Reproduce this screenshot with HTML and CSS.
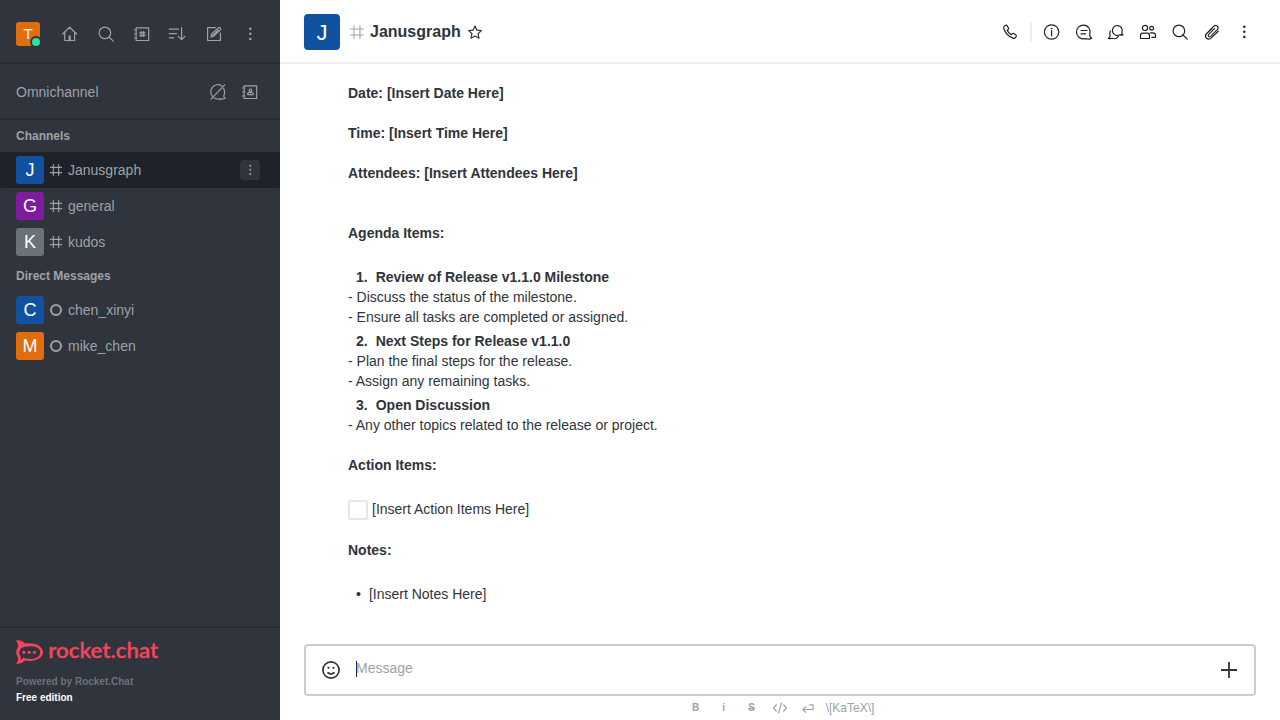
FILE: index.html
```html
<!DOCTYPE html>
<html lang="en">
<head>
<meta charset="utf-8">
<title>Janusgraph</title>
<link rel="stylesheet" href="styles.css">
</head>
<body>
<svg class="defs" aria-hidden="true">
  <symbol id="hash" viewBox="0 0 20 20"><path d="M6.7 3v14M13.3 3v14M3 6.7h14M3 13.3h14"/></symbol>
  <symbol id="search" viewBox="0 0 20 20"><circle cx="8.9" cy="8.9" r="5.8"/><path d="M13 13l4.3 4.1"/></symbol>
  <symbol id="kebab" viewBox="0 0 20 20"><g fill="currentColor" stroke="none"><circle cx="10.3" cy="4.7" r="1.25"/><circle cx="10.3" cy="9.8" r="1.25"/><circle cx="10.3" cy="15" r="1.25"/></g></symbol>
  <symbol id="book" viewBox="0 0 20 20"><path d="M4.1 5V3.8h12.6v12.7H4.1V15M4.1 7v2M4.1 11v2M2.3 6h2.6M2.3 10h2.6M2.3 14h2.6"/></symbol>
</svg>
<div class="app">
  <aside class="sidebar">
    <header class="toolbar">
      <span class="avatar avatar-s orange">T<i class="presence"></i></span>
      <nav class="tools">
        <svg class="icon" viewBox="0 0 20 20"><path d="M2.6 10L9.6 3.3 16.7 10M4.7 8.4v8.1h9.9V8.4"/><path d="M9.7 12.3v4.2" stroke-width="2.2"/></svg>
        <svg class="icon"><use href="#search"/></svg>
        <svg class="icon" viewBox="0 0 20 20"><use href="#book"/><path d="M9.200 7.400v5.300M11.600 7.400v5.300M7.700 8.800h5.400M7.700 11.300h5.400"/></svg>
        <svg class="icon" viewBox="0 0 20 20"><path d="M1.200 5.200h9.200M1.200 9.600h7.400M1.200 13.800h4.600M13.600 3.500v12M10.300 12.400l3.300 3.300 3.300-3.300"/></svg>
        <svg class="icon" viewBox="0 0 20 20"><path d="M11.500 3.700H3.600v12.800h12.800V9"/><path d="M7 12.800l.7-2.800 6.800-6.200q1.100-.7 1.900.2.800 1-.1 1.900l-6.600 6.200zM8.500 12l5.800-5.800"/></svg>
        <svg class="icon"><use href="#kebab"/></svg>
      </nav>
    </header>
    <section class="omni">
      <span>Omnichannel</span>
      <span class="omni-icons">
        <svg class="icon" viewBox="0 0 20 20"><path d="M13.700 3.900A7 7 0 0 0 4.500 14.300M6.200 16q3 1.500 6.300.9 2.500.5 4.800-.6-1.800-.7-1.500-2.400 1.700-4.300-.3-7.500M3 17.200L16.800 2.900"/></svg>
        <svg class="icon" viewBox="0 0 20 20"><use href="#book"/><circle cx="10.400" cy="8.300" r="1.300"/><path d="M7.700 12.600v-.8q0-1.400 1.500-1.400h2.400q1.500 0 1.500 1.400v.8z"/></svg>
      </span>
    </section>
    <div class="rooms">
      <h2>Channels</h2>
      <div class="room selected"><span class="avatar blue">J</span><svg class="icon small"><use href="#hash"/></svg><span>Janusgraph</span><span class="room-menu"><svg class="icon small"><use href="#kebab"/></svg></span></div>
      <div class="room"><span class="avatar purple">G</span><svg class="icon small"><use href="#hash"/></svg><span>general</span></div>
      <div class="room"><span class="avatar gray">K</span><svg class="icon small"><use href="#hash"/></svg><span>kudos</span></div>
      <h2 class="direct">Direct Messages</h2>
      <div class="room"><span class="avatar blue">C</span><i class="offline"></i><span>chen_xinyi</span></div>
      <div class="room"><span class="avatar orange">M</span><i class="offline"></i><span>mike_chen</span></div>
    </div>
    <footer class="brand">
      <svg class="logo" viewBox="0 0 144 24">
        <path d="M0 .5Q5.200-.9 9 3.600C19 1.800 27 6 27 12.300S18.500 22.200 9.200 20.600Q5.200 24.700 0 23.600 2.900 20.900 2 17.600C-.4 14.200-.4 10.400 2 7Q2.600 3.300 0 .5z" fill="#f5455c"/>
        <path d="M5.200 8.200C9 5.400 24.200 4.400 24.200 12.300S10.300 20 7.200 17.600Q5.900 19.400 4.500 20.700 5.500 18.300 4.700 16.500 1.400 12.400 5.200 8.200z" fill="#2f343d"/>
        <g fill="#f5455c"><circle cx="7.800" cy="12.300" r="1.600"/><circle cx="13.100" cy="12.300" r="1.600"/><circle cx="18.400" cy="12.300" r="1.600"/></g>
        <text x="32.200" y="18.300" textLength="110" lengthAdjust="spacingAndGlyphs">rocket.chat</text>
      </svg>
      <p class="powered">Powered by Rocket.Chat</p>
      <p class="edition">Free edition</p>
    </footer>
  </aside>
  <main class="main">
    <header class="room-header">
      <span class="avatar avatar-l blue">J</span>
      <svg class="icon title-hash"><use href="#hash"/></svg>
      <h1>Janusgraph</h1>
      <svg class="icon star" viewBox="0 0 16 16"><path d="M8 1.900l1.900 4.300 4.500.4-3.400 3.100 1 4.500L8 11.900l-4 2.300 1-4.500L1.600 6.600l4.500-.4z"/></svg>
      <div class="actions">
        <svg class="icon phone" viewBox="0 0 20 20"><path d="M4.300 4.100l1.300-.9q.8-.4 1.400.4l1.500 2.500q.4.8-.3 1.400l-1 .8q1.200 2.800 4.100 4.400l.9-1q.7-.6 1.500-.1l2.300 1.500q.7.6.2 1.400l-.8 1.300q-1 .8-2.300.3Q6.300 13.800 3.700 6.500 3.300 5 4.300 4.100z"/></svg>
        <span class="divider"></span>
        <svg class="icon" viewBox="0 0 20 20"><circle cx="9.600" cy="10" r="7.200"/><path d="M9.600 8.700v5.100"/><circle cx="9.600" cy="6.600" r=".5" fill="currentColor" stroke-width=".5"/></svg>
        <svg class="icon" viewBox="0 0 20 20"><path d="M12.500 16.700C5.500 18.100 2.500 13.500 2.500 10A6.900 6.900 0 0 1 9.400 3.100C14.500 3.100 17 7.600 15.800 12.700 15.400 14.700 16.300 15.500 17.800 16.200 16.200 17.200 14 17.200 12.500 16.700zM7 8.500h6M7 11.800h4.500"/></svg>
        <svg class="icon" viewBox="0 0 20 20"><path d="M14.200 12.600A5 5 0 1 1 15.900 10.500Q15.800 12 17 12.800 15.700 13.400 14.200 12.600zM4.400 8.800Q2.900 11.500 4.100 13.900 3.900 15.500 2.400 16.200 4 17.200 5.900 16.300 10 17.700 12.400 14.600"/></svg>
        <svg class="icon" viewBox="0 0 20 20"><circle cx="7" cy="5.900" r="2.600"/><circle cx="13.600" cy="6.300" r="1.900"/><path d="M2.500 16.500v-3q0-2.300 2.300-2.300h4.400q2.300 0 2.300 2.300v3zM12.200 10.800h2.700q2.600 0 2.600 2.300v2.200h-3.700"/></svg>
        <svg class="icon"><use href="#search"/></svg>
        <svg class="icon" viewBox="0 0 20 20"><path d="M16.300 9.200L9 16.100q-2.300 2-4.600.1-2-2.300.1-4.600l7.300-7.400q1.900-1.600 3.600-.1 1.500 1.800-.1 3.600l-6.700 6.700q-1.100.9-2 0-.9-1 .1-2l5.800-5.800M4.700 11.600l5.500-5.400"/></svg>
        <svg class="icon"><use href="#kebab"/></svg>
      </div>
    </header>
    <article class="message">
      <p class="strong">Date: [Insert Date Here]</p>
      <p class="strong">Time: [Insert Time Here]</p>
      <p class="strong attendees">Attendees: [Insert Attendees Here]</p>
      <p class="strong agenda">Agenda Items:</p>
      <div class="topic"><b>1.</b><b>Review of Release v1.1.0 Milestone</b></div>
      <div>- Discuss the status of the milestone.</div>
      <div>- Ensure all tasks are completed or assigned.</div>
      <div class="topic"><b>2.</b><b>Next Steps for Release v1.1.0</b></div>
      <div>- Plan the final steps for the release.</div>
      <div>- Assign any remaining tasks.</div>
      <div class="topic"><b>3.</b><b>Open Discussion</b></div>
      <div>- Any other topics related to the release or project.</div>
      <p class="strong action">Action Items:</p>
      <div class="task"><span class="checkbox"></span><span>[Insert Action Items Here]</span></div>
      <p class="strong notes">Notes:</p>
      <div class="bullet"><span>•</span><span>[Insert Notes Here]</span></div>
    </article>
    <div class="composer">
      <svg class="smile" viewBox="0 0 20 20"><circle cx="10" cy="10" r="8.100"/><path d="M7 12.800q3 2.200 6 0"/><g fill="currentColor" stroke="none"><circle cx="7.500" cy="7.800" r="1.100"/><circle cx="12.500" cy="7.800" r="1.100"/></g></svg>
      <span class="caret"></span><span class="placeholder">Message</span>
      <svg class="plus" viewBox="0 0 20 20"><path d="M10 2v16M2 10h16"/></svg>
    </div>
    <div class="formatting">
      <span class="fmt bold">B</span>
      <span class="fmt bold">i</span>
      <span class="fmt bold strike">S</span>
      <svg class="fmt-icon" viewBox="0 0 16 16"><path d="M4.600 4.500L1.500 8l3.100 3.500M11.400 4.500L14.500 8l-3.100 3.500M9.500 2.700l-3 10.600"/></svg>
      <svg class="fmt-icon" viewBox="0 0 16 16"><path d="M9.200 4.800h3.900v4.700H3M6 6.400L2.800 9.500 6 12.600"/></svg>
      <span class="katex">\[KaTeX\]</span>
    </div>
  </main>
</div>
</body>
</html>
```

FILE: styles.css
```css
* { box-sizing: border-box; }
body, h1, h2, p { margin: 0; }
body {
  font: 14px/20px "Liberation Sans", Arial, sans-serif;
  color: #2f343d;
  background: #fff;
  overflow: hidden;
}
.defs { position: absolute; width: 0; height: 0; }
.app { display: flex; width: 1280px; height: 720px; }
svg { flex: none; fill: none; stroke: currentColor; }
.icon { width: 20px; height: 20px; stroke-width: 1.2; stroke-linecap: round; stroke-linejoin: round; }
.icon.small { width: 16px; height: 16px; }
.room .icon.small { stroke-width: 1.4; }

.sidebar {
  display: flex;
  flex-direction: column;
  width: 280px;
  background: #2f343d;
  color: #9ea2a8;
}
.toolbar {
  display: flex;
  align-items: center;
  height: 64px;
  padding: 4px 20px 0 16px;
  border-bottom: 2px solid #262a31;
}
.toolbar .avatar { margin-top: 2px; }
.tools { display: flex; gap: 16px; margin-left: 20px; margin-top: 2px; }
.avatar {
  display: flex;
  flex: none;
  align-items: center;
  justify-content: center;
  width: 28px;
  height: 28px;
  border-radius: 3px;
  color: #fff;
  font-size: 18px;
}
.avatar-s { position: relative; width: 24px; height: 24px; font-size: 15px; }
.avatar-l { width: 36px; height: 36px; font-size: 22px; padding-top: 1px; border-radius: 4px; }
.blue { background: #1052a0; }
.orange { background: #e26d0e; }
.purple { background: #7f1b9f; }
.gray { background: #6c727a; }
.presence {
  position: absolute;
  right: -2px;
  bottom: -2px;
  width: 12px;
  height: 12px;
  border: 2px solid #2f343d;
  border-radius: 50%;
  background: #2de0a5;
}
.omni {
  display: flex;
  align-items: center;
  justify-content: space-between;
  height: 56px;
  padding: 0 20px 0 16px;
  border-bottom: 2px solid #262a31;
}
.omni > span { margin-top: 2px; }
.omni-icons { display: flex; gap: 12px; }
.rooms { flex: 1; }
.rooms h2 { height: 32px; padding: 0 16px; font-size: 12px; line-height: 32px; }
.room { display: flex; align-items: center; height: 36px; padding: 0 20px 0 16px; }
.room .icon { margin: 0 4px; }
.room.selected { background: #1f2329; border-radius: 2px; }
.room-menu {
  display: flex;
  align-items: center;
  justify-content: center;
  width: 20px;
  height: 20px;
  margin-left: auto;
  border-radius: 3px;
  background: #2f343d;
}
.room .room-menu .icon { margin: 0; }
.offline { width: 12px; height: 12px; margin: 0 6px; border: 2px solid #9ea2a8; border-radius: 50%; }
.brand { height: 94px; padding: 12px 16px 0; border-top: 2px solid #262a31; line-height: 16px; font-size: 10px; font-weight: bold; }
.logo { display: block; width: 144px; height: 24px; overflow: visible; }
.logo path, .logo circle { stroke: none; }
.logo text { font: 600 21px/1 Lato, sans-serif; fill: #f5455c; stroke: #f5455c; stroke-width: .3; }
.powered { margin-top: 10px; color: #6c727a; }
.edition { color: #fff; }

.main { display: flex; flex-direction: column; width: 1000px; }
.room-header {
  display: flex;
  align-items: center;
  height: 64px;
  padding: 0 26px 0 24px;
  border-bottom: 2px solid #eeeff1;
}
.room-header > * { margin-top: 2px; }
.room-header .title-hash { width: 18px; height: 18px; margin: 2px 4px 0 8px; color: #9ea2a8; }
.room-header h1 { font-size: 16px; line-height: 24px; }
.star { width: 16px; height: 16px; margin-left: 6px; }
.actions { display: flex; align-items: center; gap: 12px; margin-left: auto; color: #1f2329; }
.phone { margin-right: -1px; }
.divider { width: 2px; height: 20px; margin: 0 -2px 0 -1px; background: #eeeff1; }
.message { height: 580px; padding: 19px 68px 0; }
.strong { font-weight: bold; margin-bottom: 20px; }
.attendees { margin-bottom: 40px; }
.agenda { margin-bottom: 20px; }
.topic { display: flex; gap: 8px; padding: 4px 0 0 8px; }
.action { margin: 20px 0 24px; }
.task { display: flex; gap: 4px; height: 21px; }
.checkbox { width: 20px; height: 20px; margin-top: 1px; border: 2px solid #e4e7ea; border-radius: 2px; }
.notes { margin: 20px 0 24px; }
.bullet { display: flex; gap: 8px; padding-left: 8px; }
.composer {
  display: flex;
  align-items: center;
  height: 52px;
  margin: 0 24px;
  padding: 0 15px;
  border: 2px solid #cbced1;
  border-radius: 4px;
}
.smile { width: 20px; height: 20px; stroke-width: 1.7; stroke-linecap: round; }
.caret { width: 1px; height: 16px; margin: -3px 0 0 15px; background: #1f2329; }
.placeholder { flex: 1; color: #9ea2a8; margin-top: -4px; margin-left: -1px; }
.plus { width: 20px; height: 20px; stroke-width: 1.8; }
.formatting { display: flex; align-items: center; justify-content: center; gap: 12px; height: 24px; padding-left: 2px; color: #9ea2a8; }
.fmt { width: 16px; text-align: center; font-size: 10px; }
.bold { font-weight: bold; }
.strike { text-decoration: line-through; }
.fmt-icon { width: 16px; height: 16px; stroke-width: 1.2; }
.katex { margin-left: -2px; font-size: 12px; }
```
